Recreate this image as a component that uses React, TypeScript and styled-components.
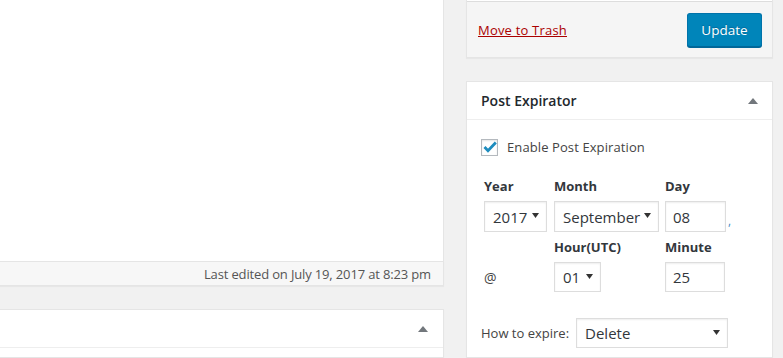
import React from "react";
import styled, { createGlobalStyle } from "styled-components";

const Global = createGlobalStyle`
  html, body { margin: 0; padding: 0; background: #f1f1f1; }
  body { font-family: "Open Sans", "Noto Sans", sans-serif; font-size: 13px; color: #444; }
  * { box-sizing: border-box; }
`;

const Page = styled.div`
  display: flex;
  width: 783px;
  height: 358px;
  overflow: hidden;
  background: #f1f1f1;
`;

const LeftCol = styled.div`
  width: 444px;
  flex: none;
  display: flex;
  flex-direction: column;
`;

const Editor = styled.div`
  height: 261px;
  background: #fff;
  border-right: 1px solid #e5e5e5;
`;

const StatusBar = styled.div`
  height: 25px;
  background: #f7f7f7;
  border: 1px solid #e5e5e5;
  border-left: none;
  box-shadow: 0 1px 1px rgba(0, 0, 0, 0.04);
  display: flex;
  align-items: center;
  justify-content: flex-end;
  padding-right: 12px;
  color: #555;
  font-size: 13px;
  letter-spacing: -0.15px;
`;

const Postbox = styled.div<{ $top: number }>`
  margin-top: ${(p) => p.$top}px;
  background: #fff;
  border: 1px solid #e5e5e5;
  box-shadow: 0 1px 1px rgba(0, 0, 0, 0.04);
  flex: 1;
`;

const LeftPostbox = styled(Postbox)`
  border-left: none;
`;

const BoxHeader = styled.div<{ $pad: number }>`
  height: 38px;
  border-bottom: 1px solid #eee;
  display: flex;
  align-items: center;
  justify-content: space-between;
  padding: 0 ${(p) => p.$pad}px 0 14px;
`;

const BoxTitle = styled.h2`
  margin: 0;
  font-size: 14px;
  font-weight: 600;
  color: #23282d;
`;

const Toggle = styled.svg`
  width: 10px;
  height: 6px;
  display: block;
`;

const Gutter = styled.div`
  width: 22px;
  flex: none;
`;

const RightCol = styled.div`
  width: 307px;
  flex: none;
  display: flex;
  flex-direction: column;
`;

const PublishBox = styled.div`
  background: #fff;
  padding-top: 1px;
  border: 1px solid #e5e5e5;
  border-top: none;
  box-shadow: 0 1px 1px rgba(0, 0, 0, 0.04);
`;

const Actions = styled.div`
  height: 56px;
  border-top: 1px solid #ddd;
  background: #f5f5f5;
  display: flex;
  align-items: center;
  justify-content: space-between;
  padding: 1px 10px 0 11px;
`;

const TrashLink = styled.a`
  color: #a00;
  text-decoration: underline;
  font-size: 13px;
  letter-spacing: 0.2px;
  cursor: pointer;
`;

const UpdateButton = styled.button`
  height: 34px;
  padding: 0;
  width: 75px;
  background: #0085ba;
  border: 1px solid #0073aa;
  border-bottom-color: #006799;
  border-radius: 3px;
  box-shadow: 0 1px 0 #006799;
  color: #fff;
  font-family: inherit;
  font-size: 13.5px;
  text-shadow: 0 -1px 1px #006799;
  cursor: pointer;
`;

const Inside = styled.div`
  padding: 0 12px 0 13px;
`;

const CheckRow = styled.label`
  margin-top: 18px;
  display: flex;
  align-items: center;
  gap: 9px;
  padding-left: 1px;
  color: #444;
  font-size: 13px;
  letter-spacing: 0.1px;
`;

const CheckBox = styled.span`
  width: 17px;
  height: 17px;
  border: 1px solid #b4b9be;
  background: #fff;
  box-shadow: inset 0 1px 2px rgba(0, 0, 0, 0.1);
  display: flex;
  align-items: center;
  justify-content: center;
`;

const DateGrid = styled.div`
  margin-top: 21px;
  padding-left: 4px;
  display: grid;
  grid-template-columns: 70px 111px auto;
  grid-template-rows: 18px 31px 18px 30px;
  row-gap: 6px;
  align-items: center;
`;

const FieldLabel = styled.div`
  font-weight: 700;
  font-size: 13px;
  color: #32373c;
`;

const SelectBox = styled.div<{ $w: number }>`
  width: ${(p) => p.$w}px;
  height: 100%;
  border: 1px solid #ddd;
  background: #fff;
  box-shadow: inset 0 1px 2px rgba(0, 0, 0, 0.07);
  display: flex;
  align-items: center;
  justify-content: space-between;
  padding: 0 7px 0 8px;
  font-size: 15px;
  color: #32373c;
`;

const TextBox = styled.div<{ $w: number }>`
  width: ${(p) => p.$w}px;
  height: 100%;
  border: 1px solid #ddd;
  background: #fff;
  box-shadow: inset 0 1px 2px rgba(0, 0, 0, 0.07);
  display: flex;
  align-items: center;
  padding-left: 7px;
  font-size: 15px;
  color: #32373c;
`;

const DayCell = styled.div`
  height: 100%;
  display: flex;
  align-items: flex-end;
  gap: 2px;
`;

const Comma = styled.span`
  color: #4a8bc4;
  font-size: 12px;
  line-height: 1;
  padding-bottom: 5px;
`;

const At = styled.div`
  font-size: 14px;
  color: #444;
`;

const HowRow = styled.div`
  margin-top: 26px;
  display: flex;
  align-items: center;
  gap: 7px;
  height: 30px;
  padding-left: 1px;
`;

const HowLabel = styled.span`
  font-size: 13px;
  color: #444;
`;

const Arrow = () => (
  <svg width="7" height="5" viewBox="0 0 7 5" style={{ display: "block", marginTop: -2 }}>
    <path d="M0 0 H7 L3.5 5 Z" fill="#333" />
  </svg>
);

const Select = ({ w, value }: { w: number; value: string }) => (
  <SelectBox $w={w}>
    <span>{value}</span>
    <Arrow />
  </SelectBox>
);

const ToggleArrow = () => (
  <Toggle viewBox="0 0 10 6">
    <path d="M0 6 L5 0 L10 6 Z" fill="#72777c" />
  </Toggle>
);

export default function App() {
  return (
    <>
      <Global />
      <Page>
        <LeftCol>
          <Editor />
          <StatusBar>Last edited on July 19, 2017 at 8:23 pm</StatusBar>
          <LeftPostbox $top={23}>
            <BoxHeader $pad={15}>
              <span />
              <ToggleArrow />
            </BoxHeader>
          </LeftPostbox>
        </LeftCol>
        <Gutter />
        <RightCol>
          <PublishBox>
            <Actions>
              <TrashLink>Move to Trash</TrashLink>
              <UpdateButton>Update</UpdateButton>
            </Actions>
          </PublishBox>
          <Postbox $top={23}>
            <BoxHeader $pad={14}>
              <BoxTitle>Post Expirator</BoxTitle>
              <ToggleArrow />
            </BoxHeader>
            <Inside>
              <CheckRow>
                <CheckBox>
                  <svg width="14" height="12" viewBox="0 0 14 12">
                    <path d="M1.5 6 L5 9.8 L12.8 1.5" stroke="#1e8cbe" strokeWidth="2.8" fill="none" />
                  </svg>
                </CheckBox>
                Enable Post Expiration
              </CheckRow>
              <DateGrid>
                <FieldLabel>Year</FieldLabel>
                <FieldLabel>Month</FieldLabel>
                <FieldLabel>Day</FieldLabel>
                <Select w={63} value="2017" />
                <Select w={105} value="September" />
                <DayCell>
                  <TextBox $w={61}>08</TextBox>
                  <Comma>,</Comma>
                </DayCell>
                <span />
                <FieldLabel>Hour(UTC)</FieldLabel>
                <FieldLabel>Minute</FieldLabel>
                <At>@</At>
                <Select w={47} value="01" />
                <TextBox $w={60}>25</TextBox>
              </DateGrid>
              <HowRow>
                <HowLabel>How to expire:</HowLabel>
                <Select w={152} value="Delete" />
              </HowRow>
            </Inside>
          </Postbox>
        </RightCol>
      </Page>
    </>
  );
}
